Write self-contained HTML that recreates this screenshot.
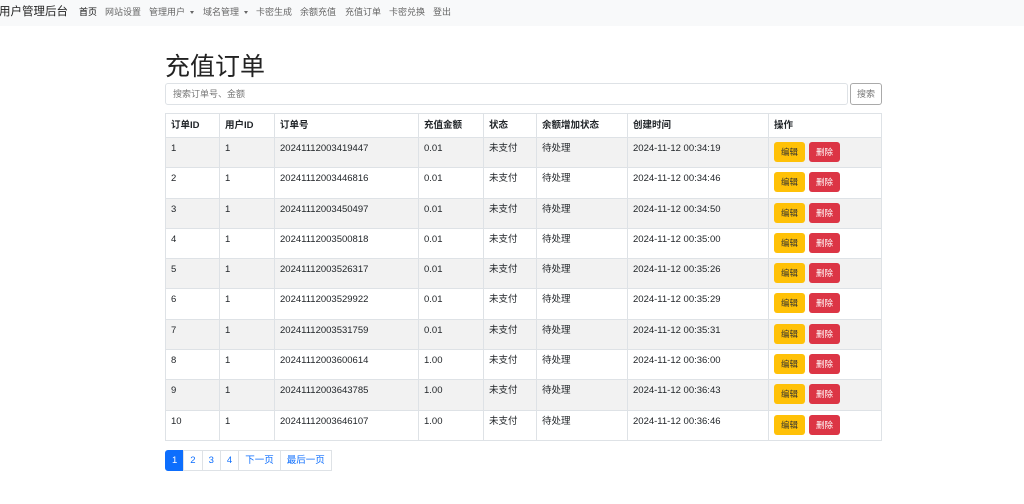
<!DOCTYPE html>
<html><head><meta charset="utf-8"><style>
*{box-sizing:border-box;margin:0;padding:0}
body{width:1024px;height:504px;background:#fff;font-family:"Liberation Sans","Noto Sans CJK SC",sans-serif;font-size:10px;color:#212529;position:relative;overflow:hidden}
.nav{height:26px;background:#f8f9fa;position:relative;white-space:nowrap}
.nav span,.nav a{position:absolute;top:0;line-height:24px;font-size:9px;color:#666}
.brand{font-size:11.5px!important;color:#222!important;left:-1px}
.nav a.act{color:#111}
.car{display:inline-block;width:0;height:0;border-left:2.5px solid transparent;border-right:2.5px solid transparent;border-top:3px solid #666;vertical-align:middle;margin-left:5px}
h1{position:absolute;left:165px;top:51px;font-size:25px;line-height:32px;font-weight:400;color:#222}
.search{position:absolute;left:165px;top:83px;width:683px;height:22px;border:1px solid #dee2e6;border-radius:3px;padding-left:7px;line-height:20px;color:#777;font-size:9px}
.sbtn{position:absolute;left:850px;top:83px;width:32px;height:22px;border:1px solid #aaa;border-radius:3px;color:#777;text-align:center;line-height:20px;font-size:9px}
table{position:absolute;left:165px;top:113px;width:717px;border-collapse:collapse}
td,th{border:1px solid #dee2e6;padding:0 5px;text-align:left;vertical-align:top;white-space:nowrap}
th{height:23px;font-weight:700;line-height:23px;font-size:9.5px}
td{height:30.3px;padding-top:3px;line-height:16px;font-size:9.5px}
tr.s td{background:#f2f2f2}
.b{display:inline-block;width:31px;height:20px;border-radius:3px;font-size:8.5px;text-align:center;line-height:20px;vertical-align:top;margin-top:1px}
.e{background:#ffc107;color:#333}
.d{background:#dc3545;color:#fff;margin-left:4px}
.pg{position:absolute;left:165px;top:450px;display:flex;height:21px}
.pg span{border:1px solid #dee2e6;margin-left:-1px;color:#0d6efd;padding:0 6px;line-height:19px;font-size:9.5px}
.pg span.a{background:#0d6efd;color:#fff;border-color:#0d6efd;border-radius:3px 0 0 3px;margin-left:0}
</style></head><body>
<div class="nav"><span class="brand">用户管理后台</span><a class="act" style="left:79px">首页</a><a style="left:105px">网站设置</a><a style="left:149px">管理用户<i class="car"></i></a><a style="left:203px">域名管理<i class="car"></i></a><a style="left:256px">卡密生成</a><a style="left:300px">余额充值</a><a style="left:345px">充值订单</a><a style="left:389px">卡密兑换</a><a style="left:433px">登出</a></div>
<h1>充值订单</h1>
<div class="search">搜索订单号、金额</div><div class="sbtn">搜索</div>
<table>
<colgroup><col style="width:54px"><col style="width:55px"><col style="width:144px"><col style="width:65px"><col style="width:53px"><col style="width:91px"><col style="width:141px"><col></colgroup>
<tr><th>订单ID</th><th>用户ID</th><th>订单号</th><th>充值金额</th><th>状态</th><th>余额增加状态</th><th>创建时间</th><th>操作</th></tr>
<tr class="s"><td>1</td><td>1</td><td>20241112003419447</td><td>0.01</td><td>未支付</td><td>待处理</td><td>2024-11-12 00:34:19</td><td><span class="b e">编辑</span><span class="b d">删除</span></td></tr>
<tr><td>2</td><td>1</td><td>20241112003446816</td><td>0.01</td><td>未支付</td><td>待处理</td><td>2024-11-12 00:34:46</td><td><span class="b e">编辑</span><span class="b d">删除</span></td></tr>
<tr class="s"><td>3</td><td>1</td><td>20241112003450497</td><td>0.01</td><td>未支付</td><td>待处理</td><td>2024-11-12 00:34:50</td><td><span class="b e">编辑</span><span class="b d">删除</span></td></tr>
<tr><td>4</td><td>1</td><td>20241112003500818</td><td>0.01</td><td>未支付</td><td>待处理</td><td>2024-11-12 00:35:00</td><td><span class="b e">编辑</span><span class="b d">删除</span></td></tr>
<tr class="s"><td>5</td><td>1</td><td>20241112003526317</td><td>0.01</td><td>未支付</td><td>待处理</td><td>2024-11-12 00:35:26</td><td><span class="b e">编辑</span><span class="b d">删除</span></td></tr>
<tr><td>6</td><td>1</td><td>20241112003529922</td><td>0.01</td><td>未支付</td><td>待处理</td><td>2024-11-12 00:35:29</td><td><span class="b e">编辑</span><span class="b d">删除</span></td></tr>
<tr class="s"><td>7</td><td>1</td><td>20241112003531759</td><td>0.01</td><td>未支付</td><td>待处理</td><td>2024-11-12 00:35:31</td><td><span class="b e">编辑</span><span class="b d">删除</span></td></tr>
<tr><td>8</td><td>1</td><td>20241112003600614</td><td>1.00</td><td>未支付</td><td>待处理</td><td>2024-11-12 00:36:00</td><td><span class="b e">编辑</span><span class="b d">删除</span></td></tr>
<tr class="s"><td>9</td><td>1</td><td>20241112003643785</td><td>1.00</td><td>未支付</td><td>待处理</td><td>2024-11-12 00:36:43</td><td><span class="b e">编辑</span><span class="b d">删除</span></td></tr>
<tr><td>10</td><td>1</td><td>20241112003646107</td><td>1.00</td><td>未支付</td><td>待处理</td><td>2024-11-12 00:36:46</td><td><span class="b e">编辑</span><span class="b d">删除</span></td></tr>
</table>
<div class="pg"><span class="a">1</span><span>2</span><span>3</span><span>4</span><span>下一页</span><span>最后一页</span></div>
</body></html>
